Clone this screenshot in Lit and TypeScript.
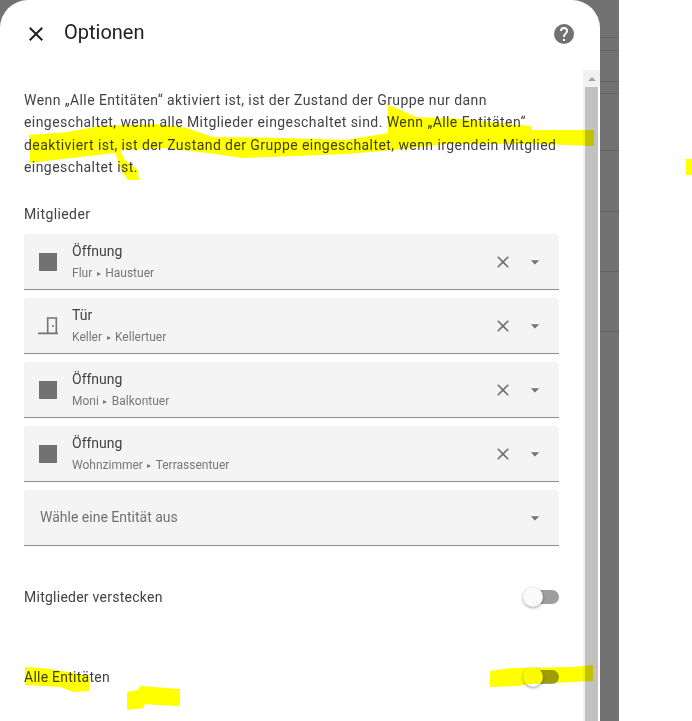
import { LitElement, css, html, svg } from 'lit'
import { customElement } from 'lit/decorators.js'

const CLOSE =
  'M19,6.41L17.59,5L12,10.59L6.41,5L5,6.41L10.59,12L5,17.59L6.41,19L12,13.41L17.59,19L19,17.59L13.41,12L19,6.41Z'
const HELP =
  'M15.07,11.25L14.17,12.17C13.45,12.89 13,13.5 13,15H11V14.5C11,13.39 11.45,12.39 12.17,11.67L13.41,10.41C13.78,10.05 14,9.55 14,9C14,7.89 13.1,7 12,7A2,2 0 0,0 10,9H8A4,4 0 0,1 12,5A4,4 0 0,1 16,9C16,9.88 15.64,10.67 15.07,11.25M13,19H11V17H13M12,2A10,10 0 0,0 2,12A10,10 0 0,0 12,22A10,10 0 0,0 22,12C22,6.47 17.5,2 12,2Z'
const MENU_DOWN = 'M7,10L12,15L17,10H7Z'

const MEMBERS = [
  { kind: 'square', name: 'Öffnung', area: 'Flur', entity: 'Haustuer' },
  { kind: 'door', name: 'Tür', area: 'Keller', entity: 'Kellertuer' },
  { kind: 'square', name: 'Öffnung', area: 'Moni', entity: 'Balkontuer' },
  { kind: 'square', name: 'Öffnung', area: 'Wohnzimmer', entity: 'Terrassentuer' }
]

// y positions of the list dividers showing through the backdrop
const BACKDROP_LINES = [37, 50, 81, 93, 150, 211, 271, 331]

// hand drawn marker strokes on top of the screenshot
const MARKER = [
  '29,135 67,132 100,126 157,124 187,128 213,137 283,138 346,140 388,133 388,105 396,108 416,117 463,119 519,125 531,126 531,130 594,130 594,146 539,144 446,144 393,150 346,154 243,158 207,153 167,148 120,150 125,160 138,170 139,180 128,180 122,172 115,153 80,157 30,163',
  '686,159 692,159 692,175 686,175',
  '25,667 43,668 68,672 89,676 89,691 73,692 60,687 25,685',
  '127,692 138,690 140,686 153,687 180,689 180,706 157,705 145,704 143,708 127,710',
  '490,671 512,668 573,667 593,665 593,681 572,682 530,684 517,686 490,687'
]

const icon = (d: string, size = 24) => html`
  <svg class="icon" width=${size} height=${size} viewBox="0 0 24 24"><path d=${d}></path></svg>
`

@customElement('app-root')
export class AppRoot extends LitElement {
  static styles = css`
    :host {
      display: block;
      position: relative;
      width: 692px;
      height: 721px;
      overflow: hidden;
      background: #fff;
      font-family: Roboto, 'Liberation Sans', sans-serif;
      font-size: 14px;
      color: #424242;
    }

    .stage {
      display: flex;
      width: 619px;
      height: 721px;
      background: #727272;
    }

    .strip {
      display: flex;
      flex-direction: column;
      width: 19px;
    }

    .strip div {
      border-bottom: 1px solid #636363;
      box-sizing: border-box;
    }

    .dialog {
      display: flex;
      flex-direction: column;
      width: 600px;
      height: 721px;
      background: #fff;
      border-radius: 28px 28px 0 0;
    }

    .icon {
      display: block;
      flex: none;
      fill: #727272;
    }

    .header {
      display: flex;
      align-items: center;
      flex: none;
      height: 70px;
      padding: 0 24px 2px;
      box-sizing: border-box;
    }

    .close .icon {
      fill: #212121;
    }

    .title {
      flex: 1;
      margin-left: 16px;
      margin-top: -4px;
      font-size: 20px;
      color: #212121;
    }

    .body {
      display: flex;
      flex: 1;
      min-height: 0;
    }

    .content {
      width: 535px;
      padding: 19px 24px 0;
    }

    .intro {
      margin: 0;
      line-height: 22.4px;
      letter-spacing: 0.43px;
    }

    .label {
      margin-top: 25px;
      line-height: 20px;
      letter-spacing: 0.4px;
    }

    .fields {
      display: flex;
      flex-direction: column;
      gap: 8px;
      margin-top: 10px;
    }

    .field {
      display: flex;
      align-items: center;
      height: 56px;
      padding: 1px 0 0 12px;
      box-sizing: border-box;
      background: #f4f4f4;
      border-bottom: 1px solid #8c8c8c;
      border-radius: 4px 4px 0 0;
    }

    .square {
      width: 18px;
      height: 18px;
      margin: 0 3px;
      background: #727272;
      flex: none;
    }

    .door {
      fill: none;
      stroke: #727272;
      stroke-width: 1.6;
    }

    .door circle {
      fill: #727272;
      stroke: none;
    }

    .text {
      flex: 1;
      margin-left: 12px;
      padding-top: 4px;
      min-width: 0;
    }

    .name {
      line-height: 19px;
      color: #424242;
    }

    .sub {
      font-size: 12px;
      line-height: 24px;
      color: #777;
    }

    .arrow-sep {
      font-size: 8px;
      vertical-align: 1px;
      margin: 0 1.5px;
    }

    .clear {
      margin-right: 12px;
    }

    .caret {
      margin-right: 14px;
    }

    .placeholder {
      flex: 1;
      margin-top: -1px;
      padding-left: 4px;
      color: #707070;
    }

    .toggle-row {
      display: flex;
      align-items: center;
      justify-content: space-between;
      height: 40px;
      margin-top: 40px;
      letter-spacing: 0.25px;
    }

    .toggle-row.first {
      margin-top: 31px;
    }

    .switch {
      display: flex;
      align-items: center;
      width: 32px;
      height: 14px;
      background: #9e9e9e;
      border-radius: 7px;
    }

    .knob {
      width: 20px;
      height: 20px;
      margin-left: -4px;
      border-radius: 50%;
      background: #fafafa;
      box-shadow: 0 1px 3px rgba(0, 0, 0, 0.4);
    }

    .scrollbar {
      display: flex;
      flex-direction: column;
      width: 17px;
      background: #f1f1f1;
    }

    .scroll-up {
      display: flex;
      justify-content: center;
      align-items: center;
      flex: none;
      height: 17px;
    }

    .scroll-up i {
      width: 0;
      height: 0;
      border: 4px solid transparent;
      border-top: 0;
      border-bottom: 4px solid #a3a3a3;
    }

    .thumb {
      flex: 1;
      margin: 0 2px;
      background: #c1c1c1;
      box-shadow: 2px 0 0 #fff;
    }

    .marker {
      position: absolute;
      inset: 0;
      mix-blend-mode: multiply;
      pointer-events: none;
    }

    .marker polygon {
      fill: #ffff00;
    }
  `

  private renderField(m: (typeof MEMBERS)[number]) {
    return html`
      <div class="field">
        ${m.kind === 'door'
          ? html`<svg class="icon door" width="24" height="24" viewBox="0 0 24 24">
              <path d="M2 19.4H22M11.7 19.4V4H20.3V19.4"></path>
              <circle cx="17" cy="12" r="1"></circle>
            </svg>`
          : html`<div class="square"></div>`}
        <div class="text">
          <div class="name">${m.name}</div>
          <div class="sub">${m.area} <span class="arrow-sep">▸</span> ${m.entity}</div>
        </div>
        <span class="clear">${icon(CLOSE, 20)}</span>
        <span class="caret">${icon(MENU_DOWN, 20)}</span>
      </div>
    `
  }

  render() {
    let prev = 0
    const segments = BACKDROP_LINES.map(y => {
      const h = y + 1 - prev
      prev = y + 1
      return h
    })

    return html`
      <div class="stage">
        <div class="dialog">
          <div class="header">
            <span class="close">${icon(CLOSE)}</span>
            <div class="title">Optionen</div>
            ${icon(HELP)}
          </div>
          <div class="body">
            <div class="content">
              <p class="intro">
                Wenn „Alle Entitäten“ aktiviert ist, ist der Zustand der Gruppe nur dann
                eingeschaltet, wenn alle Mitglieder eingeschaltet sind. Wenn „Alle Entitäten“
                deaktiviert ist, ist der Zustand der Gruppe eingeschaltet, wenn irgendein Mitglied
                eingeschaltet ist.
              </p>
              <div class="label">Mitglieder</div>
              <div class="fields">
                ${MEMBERS.map(m => this.renderField(m))}
                <div class="field">
                  <div class="placeholder">Wähle eine Entität aus</div>
                  <span class="caret">${icon(MENU_DOWN, 20)}</span>
                </div>
              </div>
              <div class="toggle-row first">
                <span>Mitglieder verstecken</span>
                <div class="switch"><div class="knob"></div></div>
              </div>
              <div class="toggle-row">
                <span>Alle Entitäten</span>
                <div class="switch"><div class="knob"></div></div>
              </div>
            </div>
            <div class="scrollbar">
              <div class="scroll-up"><i></i></div>
              <div class="thumb"></div>
            </div>
          </div>
        </div>
        <div class="strip">
          ${segments.map(h => html`<div style="height:${h}px"></div>`)}
        </div>
      </div>
      <svg class="marker" width="692" height="721" viewBox="0 0 692 721">
        ${MARKER.map(p => svg`<polygon points=${p}></polygon>`)}
      </svg>
    `
  }
}
